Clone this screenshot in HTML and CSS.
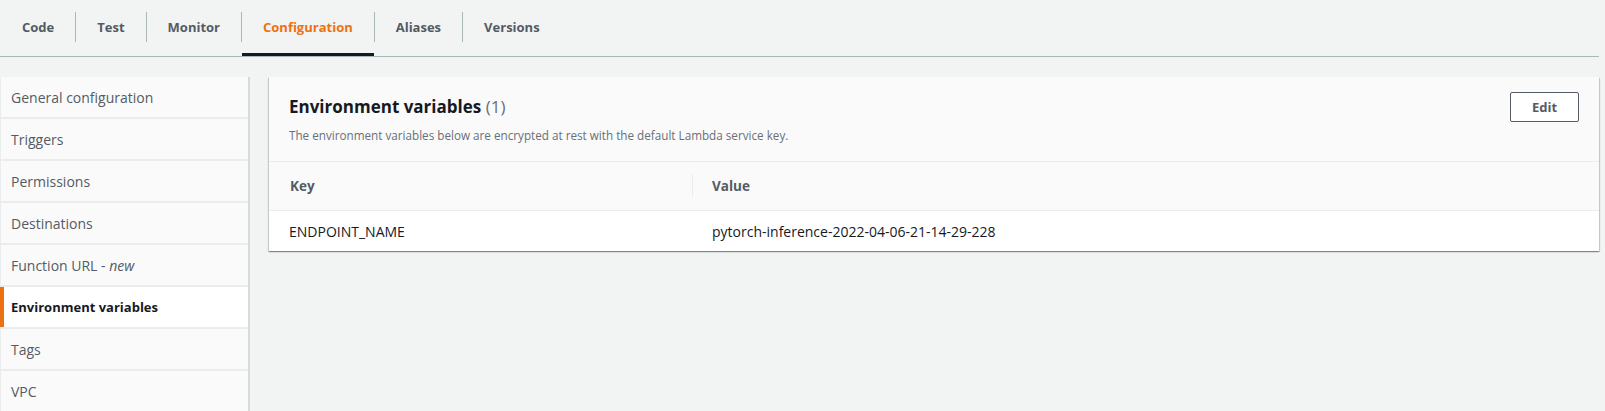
FILE: index.html
```html
<!DOCTYPE html>
<html lang="en">
<head>
<meta charset="utf-8">
<title>Lambda configuration</title>
<link rel="stylesheet" href="styles.css">
</head>
<body>
<div class="page">
  <nav class="tabs">
    <ul class="tab-list">
      <li class="tab tab-first"><a class="tab-link">Code</a></li>
      <li class="tab"><a class="tab-link">Test</a></li>
      <li class="tab"><a class="tab-link">Monitor</a></li>
      <li class="tab"><a class="tab-link tab-active">Configuration</a></li>
      <li class="tab"><a class="tab-link">Aliases</a></li>
      <li class="tab"><a class="tab-link">Versions</a></li>
    </ul>
  </nav>
  <div class="layout">
    <ul class="side-nav">
      <li class="side-item"><span>General configuration</span></li>
      <li class="side-item"><span>Triggers</span></li>
      <li class="side-item"><span>Permissions</span></li>
      <li class="side-item"><span>Destinations</span></li>
      <li class="side-item"><span>Function URL - <em>new</em></span></li>
      <li class="side-item side-active"><span>Environment variables</span></li>
      <li class="side-item"><span>Tags</span></li>
      <li class="side-item"><span>VPC</span></li>
    </ul>
    <section class="card">
      <header class="card-header">
        <div class="card-title-row">
          <h2 class="card-title">Environment variables <span class="count">(1)</span></h2>
          <button class="btn">Edit</button>
        </div>
        <p class="card-desc">The environment variables below are encrypted at rest with the default Lambda service key.</p>
      </header>
      <div class="table">
        <div class="th">Key</div>
        <div class="th th-sep">Value</div>
        <div class="td">ENDPOINT_NAME</div>
        <div class="td">pytorch-inference-2022-04-06-21-14-29-228</div>
      </div>
    </section>
  </div>
</div>
</body>
</html>
```

FILE: styles.css
```css
* { box-sizing: border-box; }
html, body { margin: 0; padding: 0; }
body {
  background: #f2f3f3;
  font-family: "Open Sans", "Noto Sans", Arial, sans-serif;
  color: #16191f;
  font-size: 14px;
  height: 411px;
  overflow: hidden;
}
.page {
  padding-right: 6px;
}
.tabs {
  border-bottom: 1px solid #aab7b8;
}
.tab-list {
  list-style: none;
  margin: 0;
  padding: 0 0 0 1px;
  display: flex;
}
.tab {
  display: flex;
}
.tab::before {
  content: "";
  width: 1px;
  height: 30px;
  margin-top: 12px;
  background: #aab7b8;
}
.tab-first::before { display: none; }
.tab-link {
  display: flex;
  align-items: center;
  height: 56px;
  padding: 0 21px;
  font-weight: 700;
  font-size: 13px;
  color: #545b64;
  border-bottom: 3px solid transparent;
}
.tab-active {
  color: #ec7211;
  border-bottom-color: #16191f;
}
.layout {
  display: grid;
  grid-template-columns: 250px 1fr;
  column-gap: 19px;
  align-items: start;
  padding-top: 20px;
}
.side-nav {
  list-style: none;
  margin: 0;
  padding: 0;
  display: flex;
  flex-direction: column;
  gap: 2px;
  background: #eaeded;
  border-right: 2px solid #d5dbdb;
  border-left: 1px solid #eaeded;
}
.side-item {
  height: 40px;
  display: flex;
  align-items: center;
  padding-left: 10px;
  background: #fafafa;
  color: #545b64;
  font-size: 14px;
  position: relative;
}
.side-item em { font-style: italic; }
.side-active {
  background: #fff;
  color: #16191f;
  font-weight: 700;
  font-size: 13px;
}
.side-active::before {
  content: "";
  position: absolute;
  left: -1px;
  top: 0;
  bottom: 0;
  width: 4px;
  background: #ec7211;
}
.card {
  background: #fff;
  box-shadow: 0 1px 1px 0 rgba(0, 28, 36, 0.3), 1px 1px 1px 0 rgba(0, 28, 36, 0.15), -1px 1px 1px 0 rgba(0, 28, 36, 0.15);
}
.card-header {
  background: #fafafa;
  padding: 15px 20px 18px 20px;
  border-bottom: 1px solid #eaeded;
}
.card-title-row {
  display: flex;
  align-items: center;
  justify-content: space-between;
  height: 30px;
}
.card-title {
  margin: 0;
  font-size: 17px;
  font-weight: 700;
  line-height: 22px;
  color: #16191f;
}
.count {
  font-weight: 400;
  color: #687078;
}
.btn {
  width: 69px;
  height: 30px;
  border: 1px solid #545b64;
  border-radius: 2px;
  background: #fff;
  font-family: inherit;
  font-size: 13px;
  font-weight: 700;
  color: #545b64;
  padding: 0;
}
.card-desc {
  margin: 5px 0 0 0;
  font-size: 11.7px;
  line-height: 16px;
  color: #687078;
}
.table {
  display: grid;
  grid-template-columns: 423px 1fr;
}
.th {
  height: 49px;
  display: flex;
  align-items: center;
  padding-left: 21px;
  background: #fafafa;
  font-weight: 700;
  font-size: 13.5px;
  color: #545b64;
  border-bottom: 1px solid #eaeded;
  position: relative;
}
.th-sep {
  padding-left: 20px;
}
.th-sep::before {
  content: "";
  position: absolute;
  left: 0;
  top: 12px;
  height: 23px;
  width: 1px;
  background: #eaeded;
}
.td {
  height: 40px;
  display: flex;
  align-items: center;
  padding-left: 20px;
  color: #16191f;
}
```
